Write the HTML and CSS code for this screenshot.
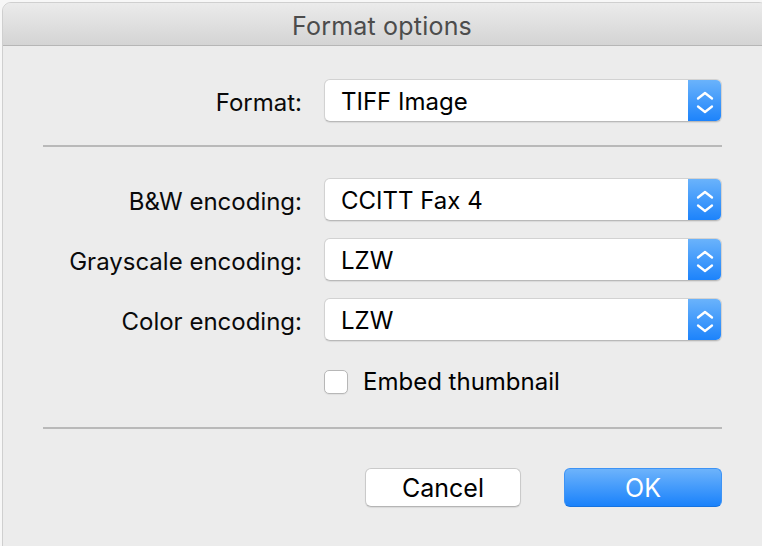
FILE: index.html
```html
<!DOCTYPE html>
<html lang="en">
<head>
<meta charset="utf-8">
<title>Format options</title>
<link rel="stylesheet" href="styles.css">
</head>
<body>
<div class="window">
  <header class="titlebar"><span class="title">Format options</span></header>
  <main class="content">
    <div class="form">
      <span class="lbl">Format:</span>
      <div class="popup"><span class="value">TIFF Image</span><span class="stepper"><svg width="34" height="43" viewBox="0 0 34 43"><polyline points="10,19.5 17,14 24,19.5"/><polyline points="10,27.5 17,33 24,27.5"/></svg></span></div>
    </div>
    <hr class="sep">
    <div class="form group">
      <span class="lbl">B&amp;W encoding:</span>
      <div class="popup"><span class="value">CCITT Fax 4</span><span class="stepper"><svg width="34" height="43" viewBox="0 0 34 43"><polyline points="10,19.5 17,14 24,19.5"/><polyline points="10,27.5 17,33 24,27.5"/></svg></span></div>
      <span class="lbl">Grayscale encoding:</span>
      <div class="popup"><span class="value">LZW</span><span class="stepper"><svg width="34" height="43" viewBox="0 0 34 43"><polyline points="10,19.5 17,14 24,19.5"/><polyline points="10,27.5 17,33 24,27.5"/></svg></span></div>
      <span class="lbl">Color encoding:</span>
      <div class="popup"><span class="value">LZW</span><span class="stepper"><svg width="34" height="43" viewBox="0 0 34 43"><polyline points="10,19.5 17,14 24,19.5"/><polyline points="10,27.5 17,33 24,27.5"/></svg></span></div>
      <span class="spacer"></span>
      <label class="check"><span class="box"></span><span>Embed thumbnail</span></label>
    </div>
    <hr class="sep">
    <div class="buttons">
      <button class="btn cancel">Cancel</button>
      <button class="btn ok">OK</button>
    </div>
  </main>
</div>
</body>
</html>
```
FILE: styles.css
```css
* { box-sizing: border-box; }
html, body { margin: 0; padding: 0; }
body {
  background: #f7f7f7;
  width: 762px;
  height: 546px;
  overflow: hidden;
  font-family: Inter, "Noto Sans", sans-serif;
  padding: 2px 0 0 2px;
}
.window {
  width: 766px;
  height: 560px;
  border: 1px solid #cfcfcf;
  border-radius: 9px 9px 0 0;
  overflow: hidden;
  background: #ececec;
}
.titlebar {
  height: 43px;
  background: linear-gradient(#ebebeb, #d4d4d4);
  border-bottom: 1px solid #b6b6b6;
  display: flex;
  align-items: center;
  justify-content: center;
  padding: 4px 6px 0 0;
}
.title {
  font-size: 25px;
  color: #4c4c4c;
  letter-spacing: 0.2px;
}
.content {
  width: 719px;
  padding: 33px 0 0 40px;
}
.form {
  display: grid;
  grid-template-columns: 1fr 398px;
  column-gap: 22px;
  row-gap: 17px;
  align-items: center;
}
.lbl {
  text-align: right;
  font-size: 24px;
  color: #0a0a0a;
  padding-top: 4px;
}
.popup {
  height: 43px;
  background: #fff;
  border-radius: 6px;
  border: 1px solid #d2d2d2;
  border-bottom-color: #b9b9b9;
  box-shadow: 0 1px 1px rgba(0,0,0,0.08);
  display: flex;
  align-items: center;
  overflow: hidden;
}
.value {
  flex: 1;
  padding: 2px 0 0 16px;
  font-size: 24px;
  color: #000;
}
.stepper {
  width: 34px;
  height: 43px;
  margin: -1px -1px -1px 0;
  background: linear-gradient(#6cb4fb, #1b82fb);
  border-radius: 0 6px 6px 0;
}
.stepper svg { display: block; }
.stepper polyline {
  fill: none;
  stroke: #fff;
  stroke-width: 2.3;
  stroke-linecap: round;
  stroke-linejoin: round;
}
.sep {
  margin: 23px 0 0 0;
  border: 0;
  height: 2px;
  background: #b9b9b9;
}
.group { margin-top: 31px; }
.check {
  display: flex;
  align-items: center;
  gap: 15px;
  font-size: 24px;
  color: #000;
  height: 43px;
  margin-top: 2px;
}
.box {
  width: 24px;
  height: 24px;
  background: #fff;
  border: 1px solid #b7b7b7;
  border-radius: 5px;
  box-shadow: 0 1px 1px rgba(0,0,0,0.06);
}
.group + .sep { margin-top: 24px; }
.buttons {
  display: flex;
  justify-content: flex-end;
  gap: 43px;
  margin-top: 39px;
}
.btn {
  height: 39px;
  border-radius: 6px;
  font-family: inherit;
  font-size: 25px;
  padding: 0;
}
.cancel {
  width: 156px;
  background: #fff;
  color: #000;
  border: 1px solid #cacaca;
  border-bottom-color: #b5b5b5;
  box-shadow: 0 1px 1px rgba(0,0,0,0.08);
}
.ok {
  width: 158px;
  background: linear-gradient(#6db3fb, #1a82fb);
  color: #fff;
  border: 1px solid #3d93f5;
  border-bottom-color: #1673e0;
}
```
